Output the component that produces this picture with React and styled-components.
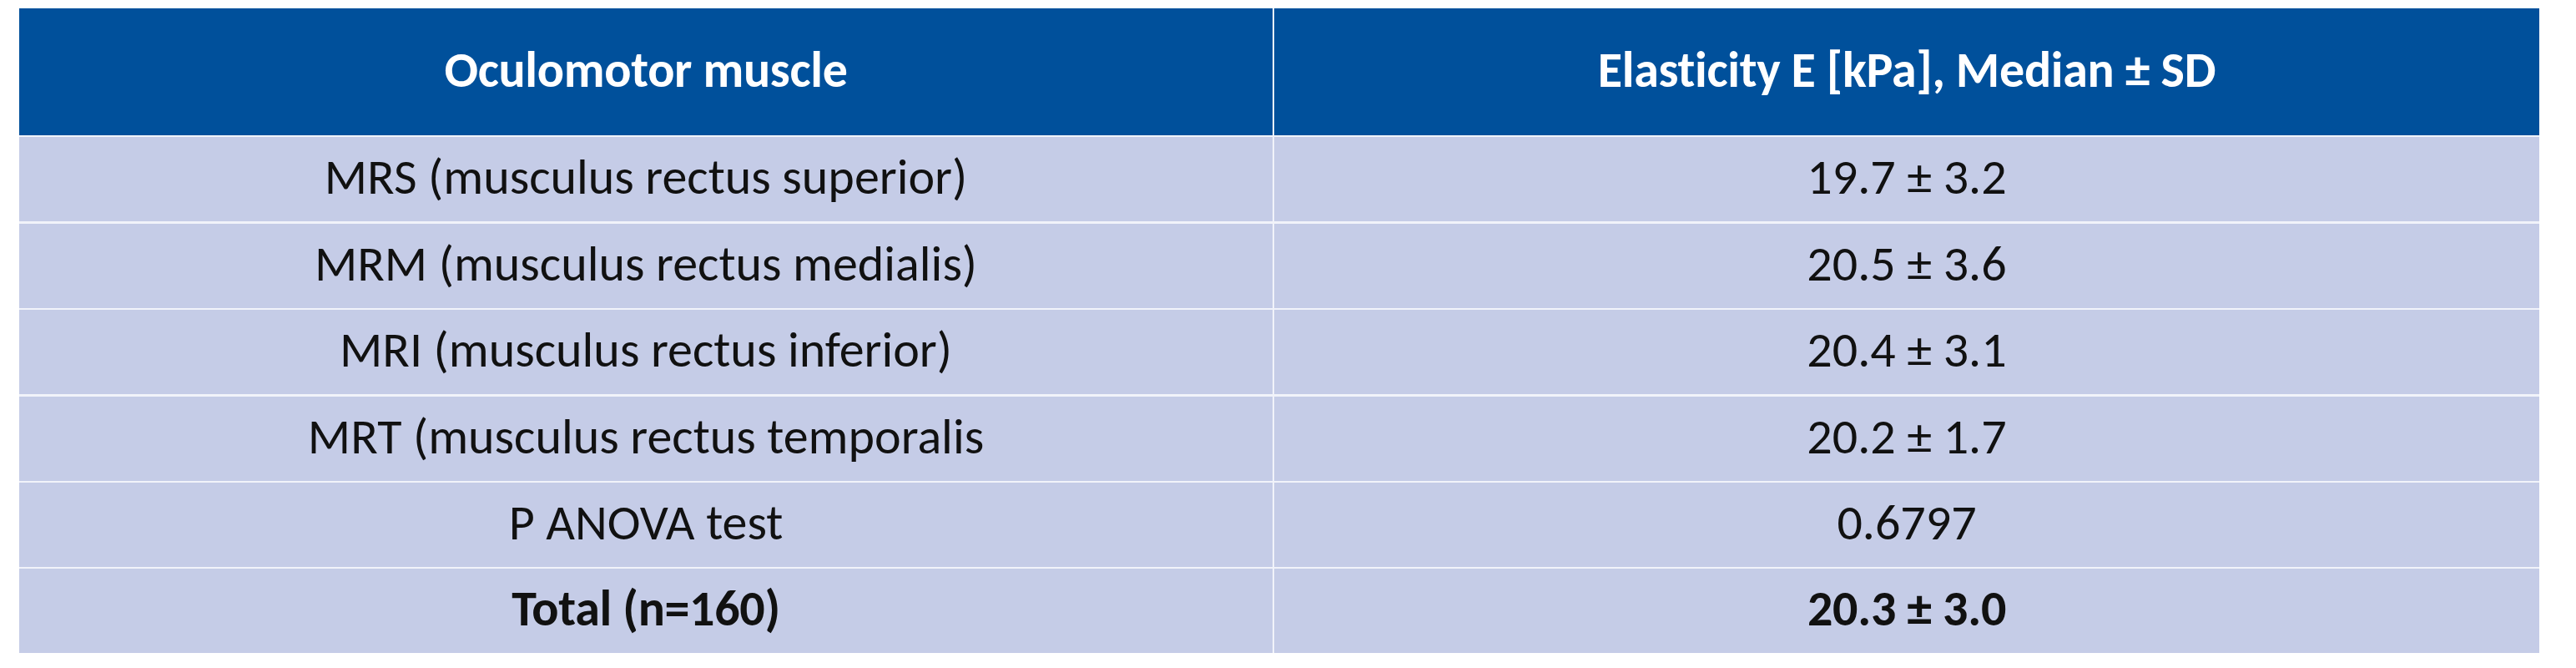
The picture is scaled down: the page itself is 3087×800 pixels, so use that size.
import React from "react";
import styled, { createGlobalStyle } from "styled-components";

const Global = createGlobalStyle`
  html, body {
    margin: 0;
    padding: 0;
    background: #ffffff;
  }
  body {
    font-family: Calibri, Carlito, Lato, "Liberation Sans", sans-serif;
  }
`;

const Page = styled.div`
  padding: 10px 0 0 23px;
  width: 3087px;
  height: 800px;
  box-sizing: border-box;
`;

const Table = styled.div`
  display: grid;
  grid-template-columns: 1502px 1516px;
  grid-template-rows: 152px repeat(6, 101px);
  column-gap: 2px;
  row-gap: 2.4px;
  width: 3020px;
  background: #f1f3fa;
`;

const HeadCell = styled.div`
  display: flex;
  align-items: center;
  justify-content: center;
  background: #00509b;
  color: #ffffff;
  font-size: 60px;
  font-weight: 700;
  letter-spacing: -0.3px;
  padding-bottom: 6px;
  box-sizing: border-box;
`;

const Cell = styled.div`
  display: flex;
  align-items: center;
  justify-content: center;
  background: #c5cce7;
  color: #111111;
  font-size: 60px;
  font-weight: ${(p) => (p.$bold ? 700 : 400)};
  letter-spacing: ${(p) => (p.$bold ? "-0.3px" : "0")};
  padding-bottom: 6px;
  box-sizing: border-box;
  white-space: nowrap;
`;

const rows = [
  ["MRS (musculus rectus superior)", "19.7 ± 3.2"],
  ["MRM (musculus rectus medialis)", "20.5 ± 3.6"],
  ["MRI (musculus rectus inferior)", "20.4 ± 3.1"],
  ["MRT (musculus rectus temporalis", "20.2 ± 1.7"],
  ["P ANOVA test", "0.6797"],
  ["Total (n=160)", "20.3 ± 3.0", true],
];

export default function App() {
  return (
    <>
      <Global />
      <Page>
        <Table>
          <HeadCell>Oculomotor muscle</HeadCell>
          <HeadCell>Elasticity E [kPa], Median ± SD</HeadCell>
          {rows.map(([a, b, bold]) => (
            <React.Fragment key={a}>
              <Cell $bold={bold}>{a}</Cell>
              <Cell $bold={bold}>{b}</Cell>
            </React.Fragment>
          ))}
        </Table>
      </Page>
    </>
  );
}
